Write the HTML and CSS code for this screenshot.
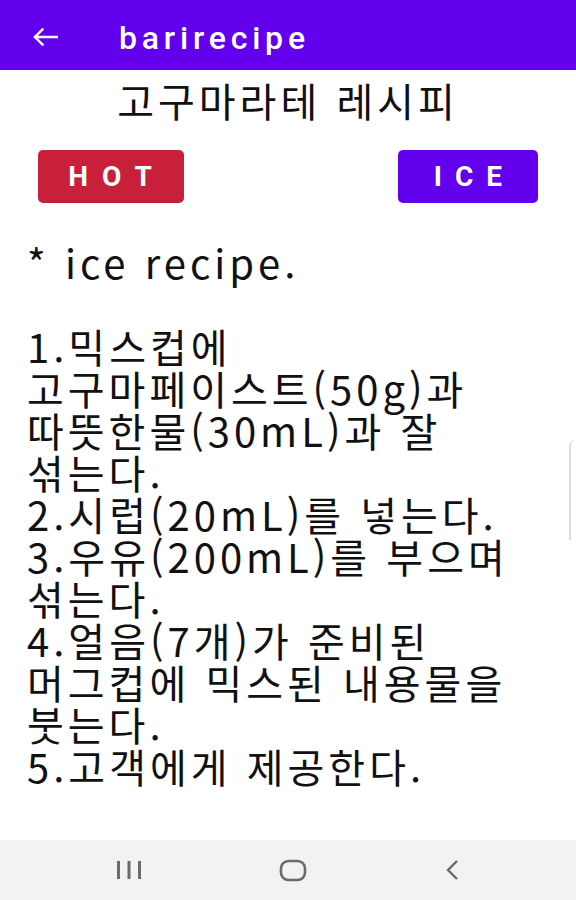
FILE: index.html
```html
<!DOCTYPE html>
<html lang="ko">
<head>
<meta charset="utf-8">
<title>barirecipe</title>
<link rel="stylesheet" href="styles.css">
</head>
<body>
<div class="screen">
  <header class="appbar">
    <svg class="back" width="26" height="20" viewBox="0 0 26 20" aria-hidden="true">
      <path d="M25 10H3 M10.5 2.5L3 10L10.5 17.5" fill="none" stroke="#ffffff" stroke-width="2.4" stroke-linecap="square"/>
    </svg>
    <h1 class="apptitle">barirecipe</h1>
  </header>
  <main class="content">
    <h2 class="title">고구마라테 레시피</h2>
    <div class="buttons">
      <button class="btn btn-hot">HOT</button>
      <button class="btn btn-ice">ICE</button>
    </div>
    <p class="recipe">* ice recipe.

1.믹스컵에 <span class="nw">고구마페이스트(50g)과</span> <span class="nw">따뜻한물(30mL)과</span> 잘 섞는다.
<span class="nw">2.시럽(20mL)를</span> 넣는다.
<span class="nw">3.우유(200mL)를</span> 부으며 섞는다.
<span class="nw">4.얼음(7개)가</span> 준비된 머그컵에 믹스된 내용물을 붓는다.
5.고객에게 제공한다.</p>
  </main>
  <nav class="navbar">
    <svg class="nav-icon" width="26" height="18" viewBox="0 0 26 18" aria-hidden="true">
      <path d="M2.5 0v18 M13 0v18 M23.5 0v18" stroke="#6a6a6a" stroke-width="3" fill="none"/>
    </svg>
    <svg class="nav-icon" width="28" height="23" viewBox="0 0 28 23" aria-hidden="true">
      <rect x="2" y="2" width="24" height="19" rx="7.5" ry="7.5" fill="none" stroke="#6a6a6a" stroke-width="2.6"/>
    </svg>
    <svg class="nav-icon" width="16" height="22" viewBox="0 0 16 22" aria-hidden="true">
      <path d="M13 2L4 11L13 20" fill="none" stroke="#6a6a6a" stroke-width="2.4"/>
    </svg>
  </nav>
  <div class="edge-handle"></div>
</div>
</body>
</html>
```

FILE: styles.css
```css
html, body {
  margin: 0;
  padding: 0;
  background: #ffffff;
}

.screen {
  position: relative;
  width: 576px;
  height: 900px;
  display: flex;
  flex-direction: column;
  overflow: hidden;
  font-family: "Noto Sans CJK KR", "Roboto", sans-serif;
}

.appbar {
  height: 70px;
  flex: none;
  background: #6200ee;
  display: flex;
  align-items: center;
  padding-left: 32px;
  box-sizing: border-box;
}

.back {
  display: block;
  flex: none;
  position: relative;
  top: 2px;
}

.apptitle {
  margin: 0 0 0 61px;
  color: #ffffff;
  font-family: "Roboto", sans-serif;
  font-size: 32px;
  font-weight: 500;
  letter-spacing: 4.8px;
  line-height: 40px;
  position: relative;
  top: 3px;
}

.content {
  flex: 1;
  display: flex;
  flex-direction: column;
}

.title {
  margin: 8px 0 0;
  text-align: center;
  font-weight: 400;
  font-size: 40px;
  letter-spacing: 4px;
  line-height: 44px;
  color: #111111;
}

.buttons {
  margin-top: 28px;
  display: flex;
  justify-content: space-between;
  padding: 0 38px 0 38px;
}

.btn {
  height: 53px;
  border: none;
  border-radius: 5px;
  color: #ffffff;
  font-family: "Roboto", sans-serif;
  font-weight: 700;
  font-size: 28px;
  line-height: 53px;
}

.btn-hot {
  width: 146px;
  background: #c8203a;
  letter-spacing: 14px;
  padding: 0 0 0 12px;
}

.btn-ice {
  width: 140px;
  background: #6200ee;
  letter-spacing: 13px;
  padding: 0 0 0 13px;
}

.recipe {
  margin: 38px 0 0;
  padding: 0 27px;
  white-space: pre-line;
  word-break: keep-all;
  font-size: 40px;
  letter-spacing: 4px;
  line-height: 42px;
  color: #111111;
}

.nw {
  white-space: nowrap;
}

.navbar {
  height: 60px;
  flex: none;
  background: #f2f2f2;
  display: flex;
  align-items: center;
  justify-content: space-between;
  padding: 0 116px 0 116px;
  box-sizing: border-box;
}

.nav-icon {
  display: block;
}

.edge-handle {
  position: absolute;
  right: 0;
  top: 440px;
  width: 5px;
  height: 100px;
  border-left: 2px solid #dcdcdc;
  border-top-left-radius: 6px;
}
```
